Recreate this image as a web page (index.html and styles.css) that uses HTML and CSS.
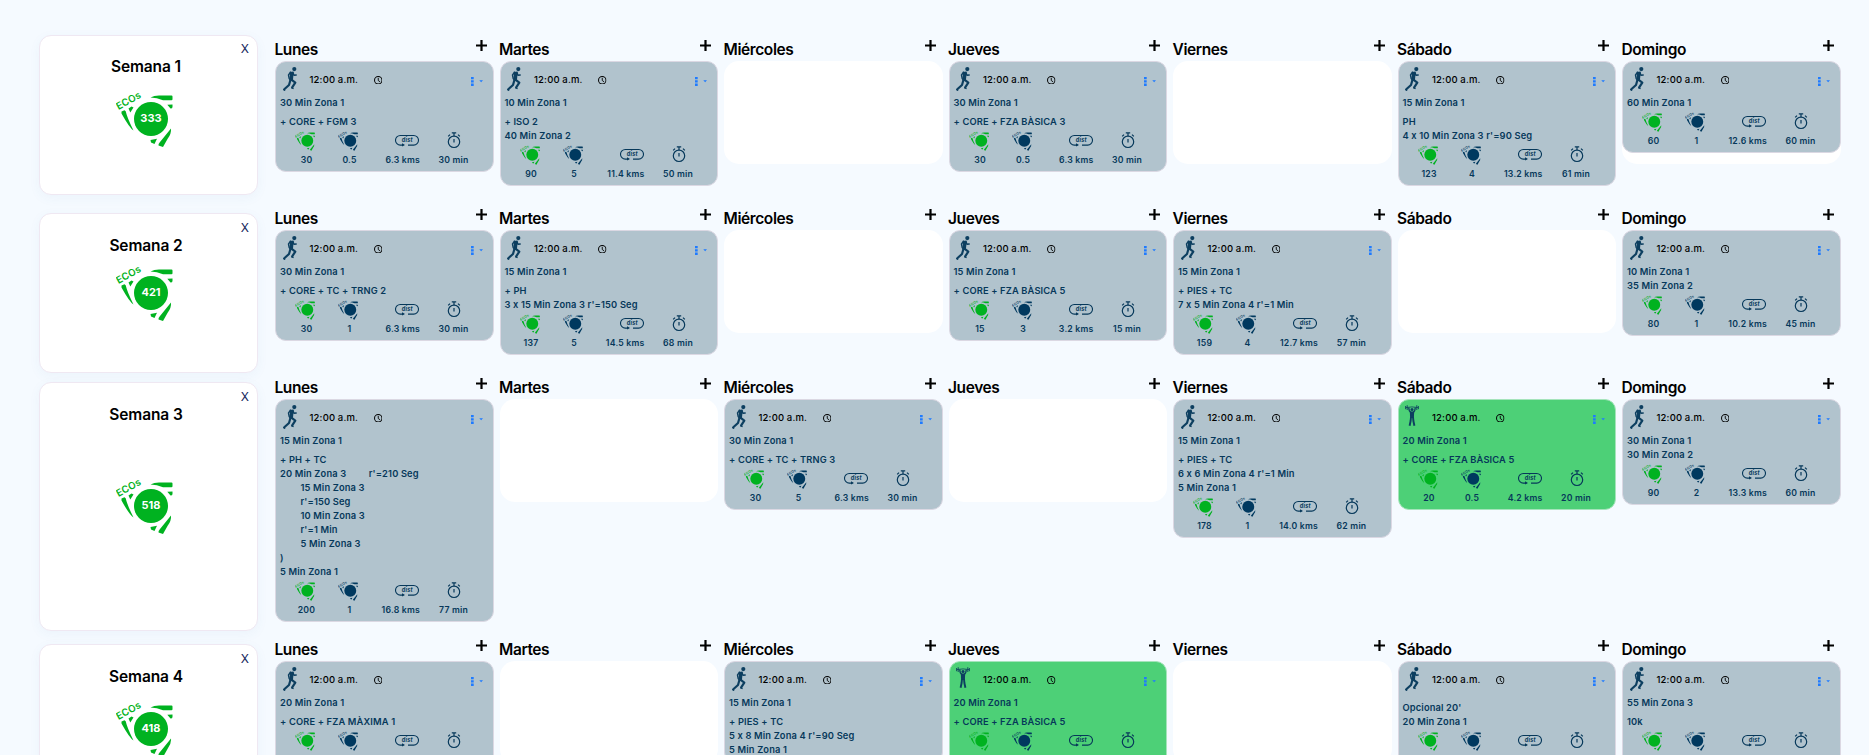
FILE: index.html
```html
<!DOCTYPE html>
<html lang="es">
<head>
<meta charset="utf-8">
<title>Plan semanal</title>
<link rel="stylesheet" href="styles.css">
</head>
<body>
<svg class="defs" width="0" height="0" aria-hidden="true">
  <symbol id="run" viewBox="0 0 14 24">
    <circle cx="11.300" cy="2.100" r="2.100"/>
    <path d="M6.800 4.700 10.600 4.700 10.300 9.500 9.900 13.200H6L6.900 8.800z"/>
    <path d="M7.500 5.200 5.500 8 6.200 11.600M9.900 5.300 10.900 8.300 13.200 8" fill="none" stroke="currentColor" stroke-width="1.400" stroke-linecap="round" stroke-linejoin="round"/>
    <path d="M7.500 12.800 6 18 1.300 22.300M8.400 12.700 12.300 15.600 9.200 20.300" fill="none" stroke="currentColor" stroke-width="2.200" stroke-linecap="round" stroke-linejoin="round"/>
    <path d="M.2 22.500l2 1.100M8.200 20.800l2.400 .8" fill="none" stroke="currentColor" stroke-width="1.200"/>
  </symbol>
  <symbol id="lift" viewBox="0 0 14 24">
    <path d="M1 2.600Q7 1.200 13 2.600" fill="none" stroke="currentColor" stroke-width=".8"/>
    <path d="M.6 1V4.200M2.200 .2V5M13.400 1V4.200M11.800 .2V5" fill="none" stroke="currentColor" stroke-width=".9"/>
    <circle cx="7" cy="4.600" r="1.500"/>
    <path d="M3.700 2.600 4.300 5.600 5.800 7.500M10.300 2.600 9.700 5.600 8.200 7.500" fill="none" stroke="currentColor" stroke-width="1.300"/>
    <path d="M4.800 6.600h4.400L8.900 13H5.100z"/>
    <path d="M6 12 5.600 16 4.600 20.800M8 12 8.400 16 9.400 20.800" fill="none" stroke="currentColor" stroke-width="1.900"/>
  </symbol>
  <symbol id="eco" viewBox="0 0 57 55">
    <text class="eco-word" x="2.500" y="18" transform="rotate(-29 2.500 18)">ECOs</text>
    <circle cx="35" cy="27" r="17"/>
    <path d="M34.500 5.600Q38 3.600 43 3.600H55.500q1 0 1 1V7.300q0 1-1 1H47Q41 5.600 34.500 5.600zM51.300 12.800 56.500 12.600V15q0 1.500-2 1.500z"/>
    <path d="M5.500 19.500 8.500 18.300 9.700 19.300Q11.200 26 17.500 38.500 13.500 36 5.500 21.500zM12.500 16.500 15.500 14.400 17.500 15.500 14.300 20.500z"/>
    <path d="M55 36.500Q55.500 42 51.500 47L47 55 42.500 53.500Q42 52 44 50zM34.500 48 41 46.800 38.500 52 35 50.500z"/>
  </symbol>
  <symbol id="dist" viewBox="0 0 24 12">
    <path d="M8.500 10.600H5.300A4.800 4.800 0 0 1 5.300 1H18.700A4.800 4.800 0 0 1 18.700 10.600H13" fill="none" stroke="currentColor" stroke-width="1.100"/>
    <path d="M7 8.700 10 10.600 7 12z"/>
    <text class="dist-word" x="12.200" y="7.800" text-anchor="middle">dist</text>
  </symbol>
  <symbol id="watch" viewBox="0 0 14 17">
    <g fill="none" stroke="currentColor" stroke-width="1.200">
      <circle cx="7" cy="9.800" r="5.700"/>
      <path d="M4.800 .8H9.200M7 1V4M7 7V10.500M1.200 4.400 3 2.600M12.800 4.400 11 2.600"/>
    </g>
  </symbol>
  <symbol id="clock" viewBox="0 0 16 16">
    <path d="M8 3.500V8.500L11.500 11" fill="none" stroke="currentColor" stroke-width="1.700"/>
    <circle cx="8" cy="8" r="7" fill="none" stroke="currentColor" stroke-width="1.900"/>
  </symbol>
</svg>
<main class="plan" id="plan"></main>
<script src="app.js"></script>
</body>
</html>
```
FILE: styles.css
```css
* { box-sizing: border-box; }
html, body { margin: 0; height: 100%; overflow: hidden; }
body {
  background: #f5faff;
  color: #000;
  font-family: Inter, "Liberation Sans", sans-serif;
}
svg { display: block; fill: currentColor; }
.defs { display: none; }
.plan { height: 755px; overflow: hidden; padding: 25px 28px 0 39px; }
.week { display: flex; align-items: flex-start; height: 169px; }
.week.tall { height: 262px; }
.summary {
  flex: none;
  display: flex;
  flex-direction: column;
  width: 219px;
  height: 160px;
  margin: 19px 17px 0 0;
  padding: 8px 8px 7px;
  border: 1px solid #efe8f2;
  border-radius: 12px;
  background: #fff;
  box-shadow: 0 3px 12px rgba(60, 110, 170, .05);
}
.week:first-child .summary { margin-top: 10px; padding-top: 7px; }
.tall .summary { height: 249px; }
.close { align-self: flex-end; font-size: 12px; line-height: 12px; color: #14245c; }
.summary h2 { margin: 1px 8px 0 0; text-align: center; font-size: 15.500px; line-height: 22px; font-weight: 600; letter-spacing: -.1px; }
.summary h2 { margin-right: 0; padding-right: 5px; }
.score { display: grid; width: 57px; height: 55px; margin: 14px 0 0 68px; color: #00b220; }
.week:nth-child(2) .score { margin-top: 9px; }
.tall .score { margin-top: 53px; }
.score svg { grid-area: 1 / 1; width: 57px; height: 55px; overflow: visible; }
.score b { grid-area: 1 / 1; z-index: 1; width: 34px; margin-left: 18px; text-align: center; font-size: 11px; line-height: 53px; color: #fff; }
.eco-word { font: 600 9.800px Inter, sans-serif; letter-spacing: .2px; }
.dist-word { font: italic 700 5.500px Inter, sans-serif; }
.days { display: grid; grid-template-columns: repeat(7, 218.500px); column-gap: 6px; }
.day header { display: flex; justify-content: space-between; height: 36px; padding: 12px 7px 0 0; }
.day h3 { margin: 0 0 0 -.5px; font-size: 15.500px; line-height: 25px; font-weight: 600; letter-spacing: -.4px; }
.plus { width: 11px; height: 11px; margin-top: 3px; }
.slot { height: 103px; border-radius: 15px; background: #fff; }
.card {
  display: flow-root;
  width: 218.500px;
  padding: 0 5px 5px 4px;
  border: 1px solid #dbd8e3;
  border-radius: 11px;
  background: #b1c3cd;
  color: #06385a;
}
.card.gym { background: #4dd077; border-color: #a5e4bb; }
.top { display: flex; height: 34px; padding-top: 5px; color: #000; }
.sport { width: 14px; height: 24px; margin-left: 2.500px; color: #0d3f60; }
.time { width: 64px; margin-left: 13px; font-size: 9.500px; line-height: 25px; font-weight: 500; white-space: nowrap; letter-spacing: .15px; }
.clock { width: 8.500px; height: 8.500px; margin-top: 8.500px; }
.menu { display: flex; margin-left: auto; padding: 10px 5px 0 0; color: #1f7bff; }
.menu svg { width: 12px; height: 9px; }
.line { display: block; height: 14px; margin: 0; font-size: 9.300px; line-height: 14px; font-weight: 600; white-space: pre; letter-spacing: .15px; }
.line.gap { margin-top: 4.500px; }
.line.in { padding-left: 20.500px; }
.stats { display: grid; grid-template-columns: 43px 43px 50px 51px; margin: 2px 0 0 4px; }
.stat { display: flex; flex-direction: column; align-items: center; min-height: 35px; font-size: 8.700px; line-height: 12px; font-weight: 600; letter-spacing: .2px; white-space: nowrap; }
.stat svg { height: 19px; margin-bottom: 4px; }
.stat .ic-eco { width: 20px; height: 20px; margin-left: -3px; margin-bottom: 3px; }
.stat .ic-dist { width: 24px; margin-right: 1px; }
.stat .ic-watch { width: 14px; margin-left: 1px; }
.stat.green .ic-eco { color: #00b220; }
.stat.load .ic-eco { color: #00395f; }
.stat.km { align-items: flex-end; }
.stat.green, .stat.load { padding-left: 2px; }
.stat.mins { padding-left: 16px; }
```
FILE: app.js
```javascript
const names = ['Lunes', 'Martes', 'Miércoles', 'Jueves', 'Viernes', 'Sábado', 'Domingo'];

// Line prefixes: "^" adds a paragraph gap, ">" indents.
const weeks = [
  { n: 1, eco: 333, days: [
    { l: ['30 Min Zona 1', '^+ CORE + FGM 3'], s: ['30', '0.5', '6.3', '30'] },
    { l: ['10 Min Zona 1', '^+ ISO 2', '40 Min Zona 2'], s: ['90', '5', '11.4', '50'] },
    null,
    { l: ['30 Min Zona 1', '^+ CORE + FZA BÀSICA 3'], s: ['30', '0.5', '6.3', '30'] },
    null,
    { l: ['15 Min Zona 1', '^PH', "4 x 10 Min Zona 3 r'=90 Seg"], s: ['123', '4', '13.2', '61'] },
    { l: ['60 Min Zona 1'], s: ['60', '1', '12.6', '60'] } ] },
  { n: 2, eco: 421, days: [
    { l: ['30 Min Zona 1', '^+ CORE + TC + TRNG 2'], s: ['30', '1', '6.3', '30'] },
    { l: ['15 Min Zona 1', '^+ PH', "3 x 15 Min Zona 3 r'=150 Seg"], s: ['137', '5', '14.5', '68'] },
    null,
    { l: ['15 Min Zona 1', '^+ CORE + FZA BÀSICA 5'], s: ['15', '3', '3.2', '15'] },
    { l: ['15 Min Zona 1', '^+ PIES + TC', "7 x 5 Min Zona 4 r'=1 Min"], s: ['159', '4', '12.7', '57'] },
    null,
    { l: ['10 Min Zona 1', '35 Min Zona 2'], s: ['80', '1', '10.2', '45'] } ] },
  { n: 3, eco: 518, tall: true, days: [
    { l: ['15 Min Zona 1', '^+ PH + TC', "20 Min Zona 3         r'=210 Seg", '>15 Min Zona 3', ">r'=150 Seg", '>10 Min Zona 3', ">r'=1 Min", '>5 Min Zona 3', ')', '5 Min Zona 1'], s: ['200', '1', '16.8', '77'] },
    null,
    { l: ['30 Min Zona 1', '^+ CORE + TC + TRNG 3'], s: ['30', '5', '6.3', '30'] },
    null,
    { l: ['15 Min Zona 1', '^+ PIES + TC', "6 x 6 Min Zona 4 r'=1 Min", '5 Min Zona 1'], s: ['178', '1', '14.0', '62'] },
    { gym: true, l: ['20 Min Zona 1', '^+ CORE + FZA BÀSICA 5'], s: ['20', '0.5', '4.2', '20'] },
    { l: ['30 Min Zona 1', '30 Min Zona 2'], s: ['90', '2', '13.3', '60'] } ] },
  { n: 4, eco: 418, days: [
    { l: ['20 Min Zona 1', '^+ CORE + FZA MÀXIMA 1'] },
    null,
    { l: ['15 Min Zona 1', '^+ PIES + TC', "5 x 8 Min Zona 4 r'=90 Seg", '5 Min Zona 1'], open: true },
    { gym: true, l: ['20 Min Zona 1', '^+ CORE + FZA BÀSICA 5'] },
    null,
    { l: ["^Opcional 20'", '20 Min Zona 1'] },
    { l: ['55 Min Zona 3', '^10k'] } ] }
];

const icon = (id, cls) => `<svg class="${cls}"><use href="#${id}"/></svg>`;

function line(text) {
  const mark = text[0];
  if (mark === '^') return `<p class="line gap">${text.slice(1)}</p>`;
  if (mark === '>') return `<p class="line in">${text.slice(1)}</p>`;
  return `<p class="line">${text}</p>`;
}

function stats(s) {
  const v = (i, unit) => s ? s[i] + unit : '';
  return `<div class="stats">
      <div class="stat green">${icon('eco', 'ic-eco')}${v(0, '')}</div>
      <div class="stat load">${icon('eco', 'ic-eco')}${v(1, '')}</div>
      <div class="stat km">${icon('dist', 'ic-dist')}${v(2, ' kms')}</div>
      <div class="stat mins">${icon('watch', 'ic-watch')}${v(3, ' min')}</div>
    </div>`;
}

function card(d) {
  return `<article class="card${d.gym ? ' gym' : ''}">
    <div class="top">${icon(d.gym ? 'lift' : 'run', 'sport')}<span class="time">12:00 a.m.</span>${icon('clock', 'clock')}
      <span class="menu"><svg viewBox="0 0 12 9"><path d="M0 0h2.700v2.300H0zM0 3.300h2.700v2.300H0zM0 6.600h2.700v2.300H0zM8.300 3.200h3.700L10.150 5.200z"/></svg></span></div>
    ${d.l.map(line).join('')}
    ${d.open ? '' : stats(d.s)}</article>`;
}

document.getElementById('plan').innerHTML = weeks.map(w => `
  <section class="week${w.tall ? ' tall' : ''}">
    <aside class="summary"><span class="close">X</span><h2>Semana ${w.n}</h2>
      <div class="score">${icon('eco', 'badge')}<b>${w.eco}</b></div></aside>
    <div class="days">${w.days.map((d, i) => `<div class="day">
      <header><h3>${names[i]}</h3><svg class="plus" viewBox="0 0 11 11"><path d="M4.400 0h2.200v4.400H11v2.200H6.600V11H4.400V6.600H0V4.400h4.400z"/></svg></header>
      ${d ? (w.n === 1 && i === 6 ? `<div class="slot">${card(d)}</div>` : card(d)) : '<div class="slot"></div>'}</div>`).join('')}</div>
  </section>`).join('');
```
